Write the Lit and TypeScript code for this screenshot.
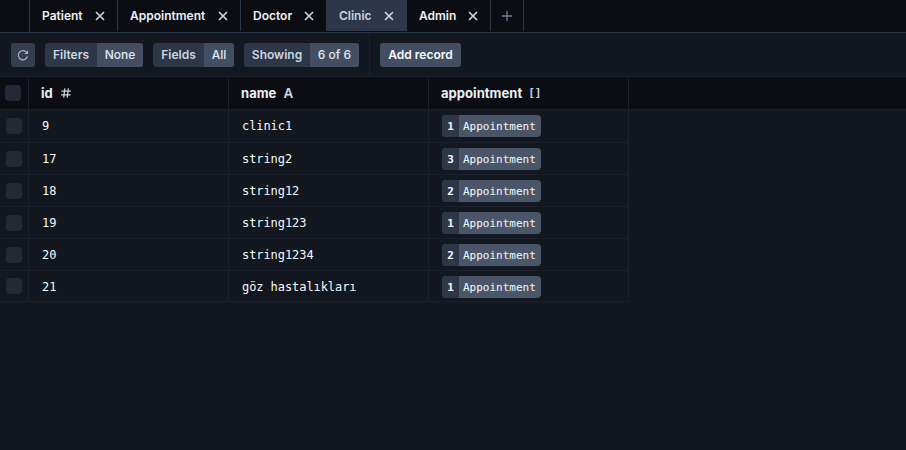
import { LitElement, html, css, svg } from "lit";
import { customElement } from "lit/decorators.js";
import { classMap } from "lit/directives/class-map.js";
import { styleMap } from "lit/directives/style-map.js";

const TABS = [
  { name: "Patient", width: 88 },
  { name: "Appointment", width: 123 },
  { name: "Doctor", width: 86 },
  { name: "Clinic", width: 80, active: true },
  { name: "Admin", width: 84 },
];

const ROWS = [
  { id: 9, name: "clinic1", count: 1, height: 33 },
  { id: 17, name: "string2", count: 3, height: 32 },
  { id: 18, name: "string12", count: 2, height: 32 },
  { id: 19, name: "string123", count: 1, height: 32 },
  { id: 20, name: "string1234", count: 2, height: 32 },
  { id: 21, name: "göz hastalıkları", count: 1, height: 31 },
];

const closeIcon = html`<svg class="close" width="10" height="10" viewBox="0 0 10 10">
  ${svg`<path d="M1 1L9 9M9 1L1 9" />`}
</svg>`;

@customElement("app-root")
export class AppRoot extends LitElement {
  static styles = css`
    :host {
      display: flex;
      flex-direction: column;
      box-sizing: border-box;
      height: 450px;
      overflow: hidden;
      background: #13171f;
      color: #edf0f5;
      font: 600 13px/16px Inter, sans-serif;
      white-space: nowrap;
    }
    * {
      box-sizing: border-box;
    }
    svg {
      display: block;
      flex: none;
      fill: none;
      stroke: currentColor;
    }
    .tabs {
      display: flex;
      flex: none;
      height: 33px;
      background: #0c0d12;
      border-bottom: 1px solid #2d3748;
    }
    .lead {
      width: 30px;
      border-right: 1px solid #2d3748;
    }
    .tab {
      display: flex;
      align-items: center;
      justify-content: space-between;
      height: 31px;
      padding: 0 12px;
      border-right: 1px solid #2d3748;
      font-size: 12px;
    }
    .tab.active {
      background: #2d3748;
      color: #cbd5e0;
    }
    .close {
      color: #cbd5e0;
      stroke-width: 1.7;
    }
    .add-tab {
      display: flex;
      align-items: center;
      justify-content: center;
      width: 33px;
      height: 31px;
      border-right: 1px solid #2d3748;
      color: #718096;
      stroke-width: 1.3;
    }
    .toolbar {
      display: flex;
      flex: none;
      align-items: center;
      height: 44px;
      padding-left: 11px;
      border-bottom: 1px solid #1c212d;
      font-size: 12px;
    }
    .refresh,
    .add {
      display: flex;
      align-items: center;
      justify-content: center;
      height: 24px;
      border-radius: 3px;
    }
    .refresh {
      width: 24px;
      background: #353f50;
      color: #a5afbd;
      margin-right: 10px;
    }
    .group {
      display: flex;
      height: 24px;
      line-height: 24px;
      margin-right: 10px;
      border-radius: 3px;
      overflow: hidden;
      text-align: center;
      color: #cbd5e0;
      background: #2d3748;
    }
    .value {
      background: #434e62;
      color: #e2e8f0;
      font-weight: 500;
    }
    .separator {
      width: 1px;
      height: 43px;
      background: #1c212d;
      margin-right: 10px;
    }
    .add {
      width: 81px;
      background: #434e62;
      color: #f7fafc;
    }
    .row {
      display: grid;
      grid-template-columns: 29px 200px 200px 200px;
      width: 629px;
      flex: none;
      border-bottom: 1px solid #1c212d;
      font: 12px/16px "DejaVu Sans Mono", monospace;
      letter-spacing: -0.07px;
      color: #f7fafc;
    }
    .cell {
      display: flex;
      align-items: center;
      padding-left: 13px;
      border-right: 1px solid #1c212d;
    }
    .row:last-child .cell:not(.select) {
      padding-top: 2px;
    }
    .cell.select {
      padding-left: 6px;
    }
    .row.head {
      width: 100%;
      height: 33px;
      background: #0c0d12;
      font: 700 13px/16px Inter, sans-serif;
      letter-spacing: 0.04px;
      color: #edf0f5;
    }
    .head .cell {
      gap: 8px;
      padding-left: 12px;
    }
    .head .select {
      padding-left: 5px;
    }
    .check {
      width: 16px;
      height: 16px;
      border-radius: 4px;
      background: #232936;
    }
    .type {
      color: #cbd5e0;
      font-weight: 600;
    }
    .letter {
      font-size: 13.5px;
      margin-left: -1px;
    }
    .brackets {
      font: 600 11px/16px "DejaVu Sans Mono", monospace;
      margin-left: -2px;
    }
    .relation {
      display: flex;
      width: 99px;
      height: 22px;
      line-height: 23px;
      border-radius: 4px;
      overflow: hidden;
      background: #4a5568;
      font-size: 11px;
      letter-spacing: 0;
    }
    .count {
      width: 17px;
      text-align: center;
      background: #2d3748;
      font-weight: 700;
    }
    .model {
      padding-left: 4px;
    }
  `;

  private group(label: string, value: string, left: number, right: number) {
    return html`<div class="group">
      <span style=${styleMap({ width: `${left}px` })}>${label}</span>
      <span class="value" style=${styleMap({ width: `${right}px` })}>${value}</span>
    </div>`;
  }

  render() {
    return html`
      <div class="tabs">
        <div class="lead"></div>
        ${TABS.map(
          (t) => html`<div
            class=${classMap({ tab: true, active: !!t.active })}
            style=${styleMap({ width: `${t.width}px` })}
          >
            <span>${t.name}</span>${closeIcon}
          </div>`
        )}
        <div class="add-tab">
          <svg width="10" height="10" viewBox="0 0 10 10"><path d="M5 0V10M0 5H10" /></svg>
        </div>
      </div>
      <div class="toolbar">
        <div class="refresh">
          <svg width="12" height="12" viewBox="0 0 12 12" stroke-width="1.3">
            <path d="M10.4 7.5A4.6 4.6 0 1 1 9.2 2.9L10.4 4.1" />
            <path d="M11 1.2V5H7.2Z" fill="currentColor" stroke="none" />
          </svg>
        </div>
        ${this.group("Filters", "None", 52, 46)} ${this.group("Fields", "All", 51, 30)}
        ${this.group("Showing", "6 of 6", 66, 49)}
        <div class="separator"></div>
        <div class="add">Add record</div>
      </div>
      <div class="row head">
        <div class="cell select"><span class="check"></span></div>
        <div class="cell">
          id
          <svg class="type" width="10" height="10" viewBox="0 0 10 10" stroke-width="1.3">
            <path d="M3.9 .3L2.7 9.7M7.4 .3L6.2 9.7M.4 3.2H9.9M0 6.8H9.5" />
          </svg>
        </div>
        <div class="cell">name <span class="type letter">A</span></div>
        <div class="cell">appointment <span class="type brackets">[]</span></div>
      </div>
      ${ROWS.map(
        (r) => html`<div class="row" style=${styleMap({ height: `${r.height}px` })}>
          <div class="cell select"><span class="check"></span></div>
          <div class="cell">${r.id}</div>
          <div class="cell">${r.name}</div>
          <div class="cell">
            <div class="relation">
              <span class="count">${r.count}</span><span class="model">Appointment</span>
            </div>
          </div>
        </div>`
      )}
    `;
  }
}
